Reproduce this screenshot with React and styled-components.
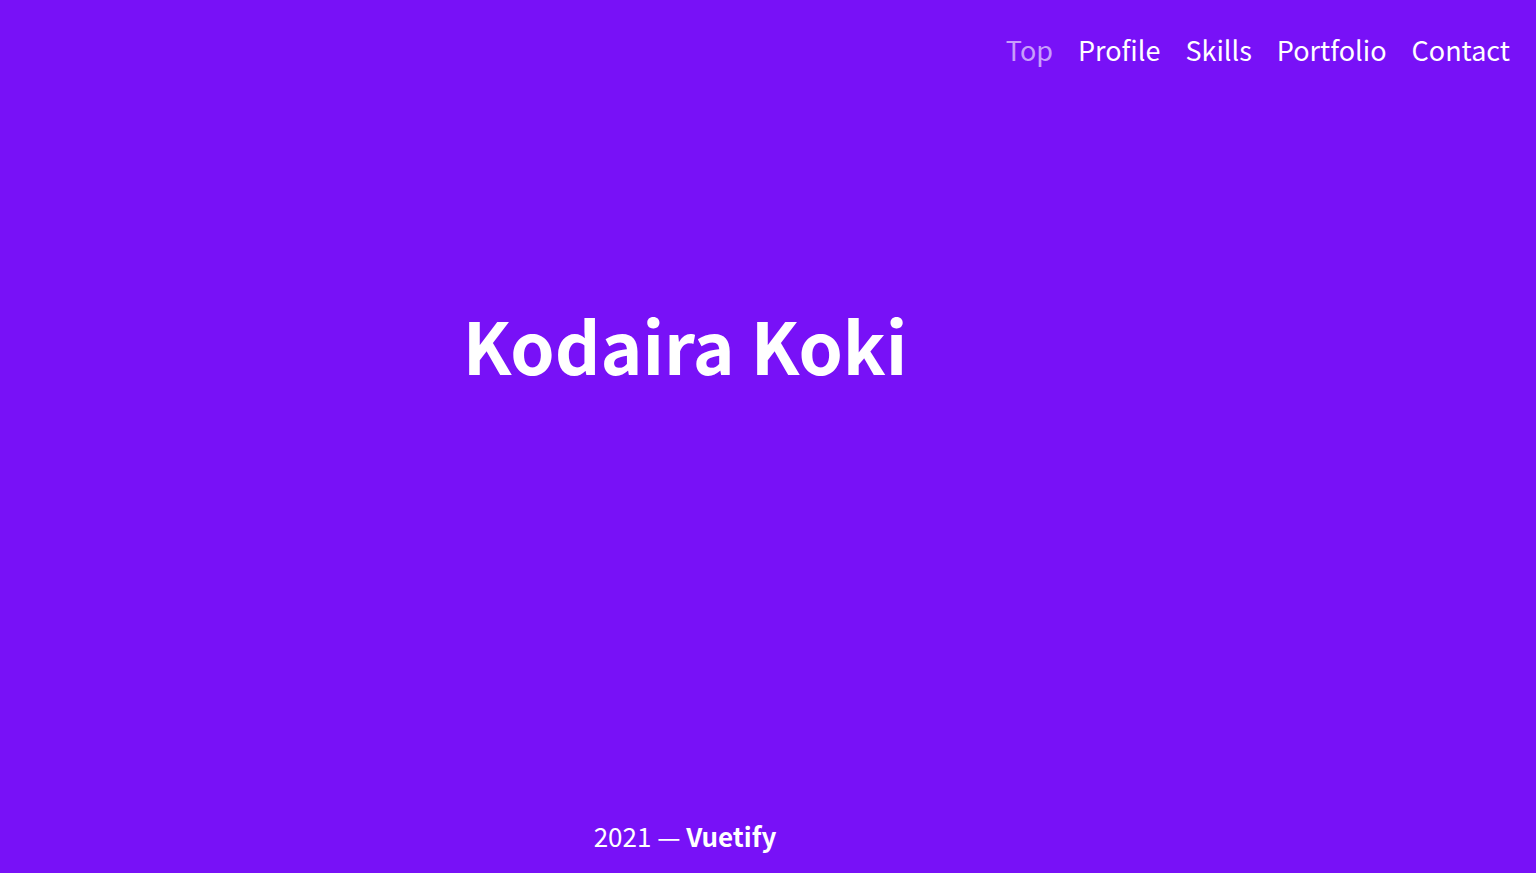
import React from 'react';
import styled, { createGlobalStyle } from 'styled-components';

const GlobalStyle = createGlobalStyle`
  html, body {
    margin: 0;
    padding: 0;
    background: #7811f7;
  }
  body {
    font-family: "Noto Sans CJK JP", "Noto Sans", sans-serif;
    color: #fff;
  }
`;

const Page = styled.div`
  height: 873px;
  display: flex;
  flex-direction: column;
  background: #7811f7;
  overflow: hidden;
`;

const Nav = styled.nav`
  display: flex;
  justify-content: flex-end;
  gap: 25px;
  padding: 30px 26px 0 0;
  height: 64px;
  box-sizing: border-box;
`;

const NavLink = styled.a`
  font-size: 27px;
  line-height: 40px;
  color: ${p => (p.$active ? 'rgba(255,255,255,0.6)' : '#fff')};
  text-decoration: none;
  cursor: pointer;
`;

const Main = styled.main`
  flex: 1;
  width: 1370px;
  display: flex;
  flex-direction: column;
  align-items: center;
`;

const Hero = styled.div`
  flex: 1;
  display: flex;
  align-items: center;
  padding-bottom: 194px;
`;

const Title = styled.h1`
  margin: 0;
  font-size: 71px;
  font-weight: 700;
  letter-spacing: 0;
`;

const Footer = styled.footer`
  font-size: 26px;
  padding-bottom: 19px;
  strong {
    font-weight: 700;
  }
`;

const links = ['Top', 'Profile', 'Skills', 'Portfolio', 'Contact'];

export default function App() {
  return (
    <Page>
      <GlobalStyle />
      <Nav>
        {links.map((l, i) => (
          <NavLink key={l} $active={i === 0}>{l}</NavLink>
        ))}
      </Nav>
      <Main>
        <Hero>
          <Title>Kodaira Koki</Title>
        </Hero>
        <Footer>
          2021 — <strong>Vuetify</strong>
        </Footer>
      </Main>
    </Page>
  );
}
